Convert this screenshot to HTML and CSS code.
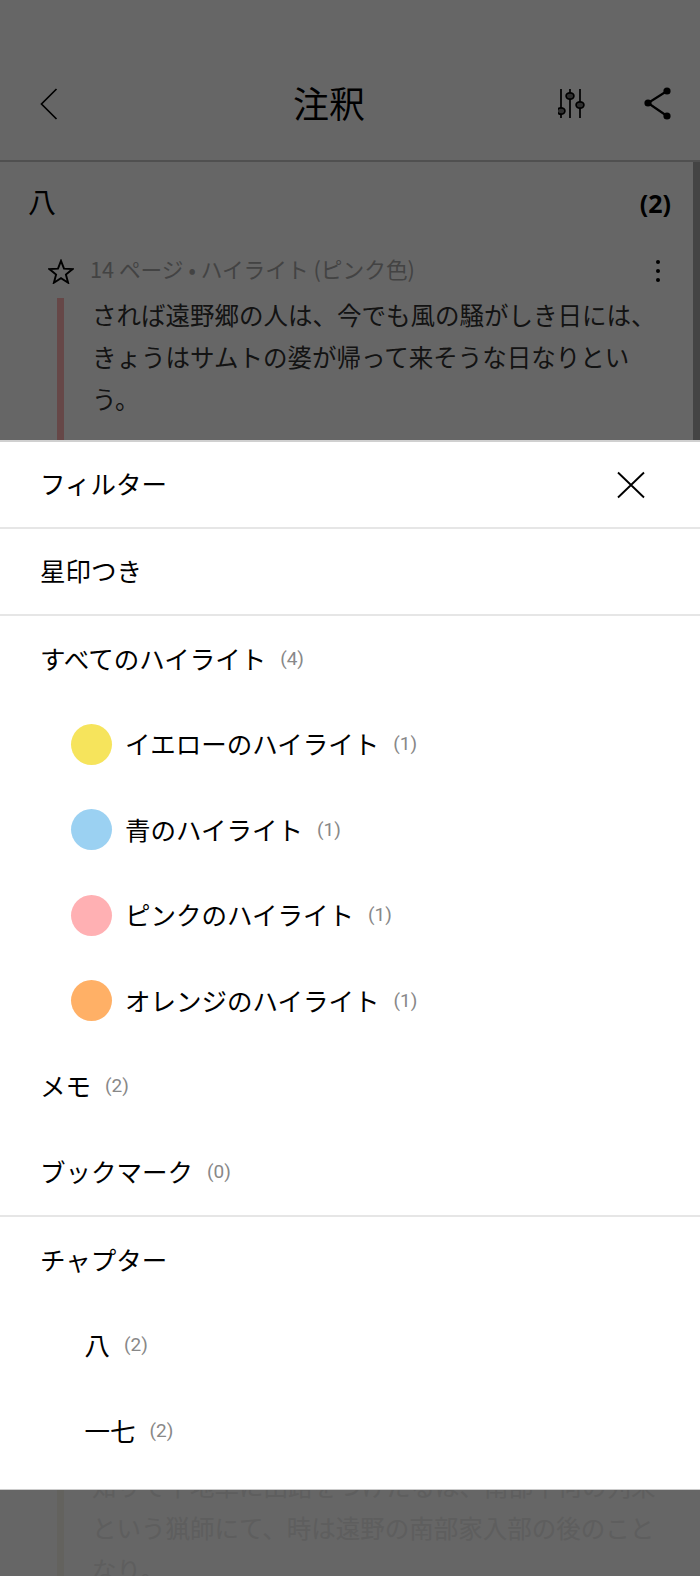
FILE: index.html
```html
<!DOCTYPE html>
<html lang="ja">
<head>
<meta charset="utf-8">
<title>注釈</title>
<link rel="stylesheet" href="styles.css">
</head>
<body>
<div class="page">
  <header class="topbar">
    <svg class="back" width="18" height="32" viewBox="0 0 18 32"><path d="M16.5 1 1.5 16l15 15" fill="none" stroke="#000" stroke-width="1.7"/></svg>
    <h1 class="title">注釈</h1>
    <svg class="filter" width="32" height="32" viewBox="0 0 32 32">
      <path d="M3 1v29M12 1v29M22 1v29" fill="none" stroke="#000" stroke-width="1.7"/>
      <ellipse cx="3" cy="23" rx="3.9" ry="3.2" fill="#777" stroke="#000" stroke-width="1.7"/>
      <ellipse cx="12" cy="8" rx="3.9" ry="3.2" fill="#777" stroke="#000" stroke-width="1.7"/>
      <ellipse cx="22" cy="17" rx="3.9" ry="3.2" fill="#777" stroke="#000" stroke-width="1.7"/>
    </svg>
    <svg class="share" width="28" height="34" viewBox="0 0 28 34">
      <path d="M23 4 4 16l19 13" fill="none" stroke="#000" stroke-width="2.2"/>
      <circle cx="23" cy="4" r="3.6"/><circle cx="4" cy="16" r="3.6"/><circle cx="23" cy="29" r="3.6"/>
    </svg>
  </header>
  <main class="list">
    <div class="section-head"><span class="section-name">八</span><span class="section-count">(2)</span></div>
    <div class="meta">
      <svg class="star" width="26" height="25" viewBox="0 0 26 25"><path d="M13 1.8 16 9.6l8.6.5-6.7 5.4 2.2 8.2L13 19.2l-7.1 4.5 2.2-8.2-6.7-5.4 8.6-.5z" fill="none" stroke="#000" stroke-width="1.9"/></svg>
      <span class="meta-text">14 ページ • ハイライト (ピンク色)</span>
      <svg class="more" width="6" height="24" viewBox="0 0 6 24"><circle cx="3" cy="3" r="2"/><circle cx="3" cy="12" r="2"/><circle cx="3" cy="21" r="2"/></svg>
    </div>
    <div class="note note-pink">
      <p class="note-text">されば遠野郷の人は、今でも風の騒がしき日には、きょうはサムトの婆が帰って来そうな日なりという。</p>
    </div>
    <div class="note note-yellow">
      <p class="note-text faint">知りて平地草に田路をつけたるは、南部十何の列来という猟師にて、時は遠野の南部家入部の後のことなり。</p>
    </div>
    <div class="scrollbar"></div>
  </main>
  <div class="scrim"></div>
  <section class="sheet">
    <div class="row row-top divided"><span class="label">フィルター</span>
      <svg class="close" width="28" height="28" viewBox="0 0 28 28"><path d="M1 1.5l26 25M27 1.5l-26 25" fill="none" stroke="#000" stroke-width="1.9"/></svg>
    </div>
    <div class="row row-top divided"><span class="label">星印つき</span></div>
    <div class="row"><span class="label">すべてのハイライト</span><span class="count">(4)</span></div>
    <div class="row row-color"><span class="dot dot-yellow"></span><span class="label">イエローのハイライト</span><span class="count">(1)</span></div>
    <div class="row row-color"><span class="dot dot-blue"></span><span class="label">青のハイライト</span><span class="count">(1)</span></div>
    <div class="row row-color"><span class="dot dot-pink"></span><span class="label">ピンクのハイライト</span><span class="count">(1)</span></div>
    <div class="row row-color"><span class="dot dot-orange"></span><span class="label">オレンジのハイライト</span><span class="count">(1)</span></div>
    <div class="row"><span class="label">メモ</span><span class="count">(2)</span></div>
    <div class="row last-in-group"><span class="label">ブックマーク</span><span class="count">(0)</span></div>
    <div class="row"><span class="label">チャプター</span></div>
    <div class="row row-child"><span class="label">八</span><span class="count">(2)</span></div>
    <div class="row row-child"><span class="label">一七</span><span class="count">(2)</span></div>
  </section>
</div>
</body>
</html>
```
FILE: styles.css
```css
* { box-sizing: border-box; }
html, body { margin: 0; padding: 0; }
body { font-family: "Noto Sans CJK JP", "Noto Sans", sans-serif; color: #000; background: #fff; }
.page { position: relative; width: 700px; height: 1576px; overflow: hidden; background: #fff; }

.topbar { display: flex; align-items: center; height: 162px; padding: 47px 28.5px 0 40px; border-bottom: 2px solid #c8c8c8; }
.back { flex: none; }
.title { margin: 0 0 4px 235px; font-size: 36px; font-weight: 400; line-height: 1; flex: 1; }
.filter { flex: none; margin-right: 53.5px; }
.share { flex: none; }

.list { position: relative; height: 1414px; }
.scrollbar { position: absolute; top: 0; right: 0; width: 7px; height: 280px; background: #aaa; }
.section-head { display: flex; justify-content: space-between; align-items: center; height: 82px; padding: 0 29px 0 28px; }
.section-name { font-size: 28px; margin-bottom: 4px; }
.section-count { font-size: 25px; font-weight: 700; font-family: "Noto Sans", sans-serif; }
.meta { display: flex; align-items: center; height: 54px; padding: 0 39px 0 48px; }
.star { flex: none; }
.meta-text { flex: 1; margin: 0 0 5px 16px; font-size: 21.7px; color: #a8a8a8; }
.more { flex: none; }
.note { display: flow-root; margin-left: 57px; border-left: 7px solid #ffb2b2; padding: 0 30px 0 28px; }
.note-pink { height: 1171px; }
.note-yellow { border-left-color: #f8f6ea; }
.note-text { margin: -4px 0 0; font-size: 24.5px; line-height: 42px; color: #303030; }
.note-text.faint { color: #eaeaea; }

.scrim { position: absolute; inset: 0; background: rgba(0, 0, 0, 0.6); }

.sheet { position: absolute; left: 0; right: 0; top: 440px; height: 1050px; background: #fff; border-top: 2px solid #d0d0d0; border-bottom: 1px solid #ccc; }
.row { display: flex; align-items: center; height: 85.5px; padding: 0 40px 3px; }
.row-top { height: 87px; padding-bottom: 4px; }
.divided { border-bottom: 2px solid #e6e6e6; }
.last-in-group { border-bottom: 2px solid #e6e6e6; height: 88px; padding-bottom: 3px; }
.label { font-size: 25.5px; line-height: 1; }
.count { margin: 2px 0 0 14px; font-family: Roboto, sans-serif; font-size: 19px; color: #888; }
.row-color { padding-left: 70.5px; }
.row-child { padding-left: 84.5px; }
.dot { flex: none; width: 41px; height: 41px; border-radius: 50%; margin: 3px 13.5px 0 0; }
.dot-yellow { background: #f6e45c; }
.dot-blue { background: #9bd1f2; }
.dot-pink { background: #ffb0b3; }
.dot-orange { background: #ffb066; }
.close { margin: 4px 15px 0 auto; }
```
